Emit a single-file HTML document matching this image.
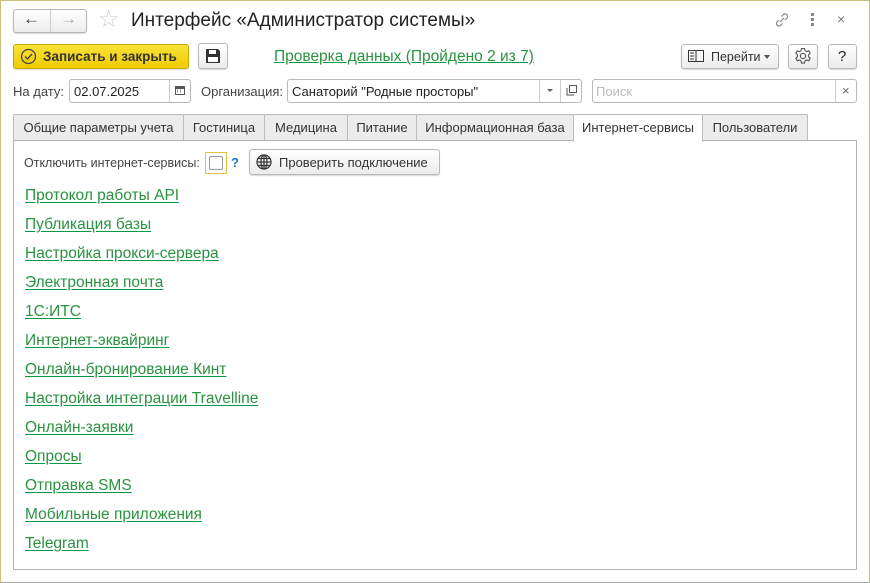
<!DOCTYPE html>
<html><head><meta charset="utf-8"><style>
*{box-sizing:border-box;margin:0;padding:0}
body{width:870px;height:583px;position:relative;background:#fff;font-family:"Liberation Sans",Arial,sans-serif;font-size:13px;color:#333;overflow:hidden}
.frame{position:absolute;left:0;top:0;width:870px;height:583px;border:1px solid #c8bd7a;border-bottom-color:#a8a8a8}
.a{position:absolute}
.btn{position:absolute;border:1px solid #b8b8b8;border-radius:3px;background:linear-gradient(#fff,#ececec);box-shadow:0 1px 1px rgba(0,0,0,.15)}
.inp{position:absolute;border:1px solid #b9b9b9;border-radius:3px;background:#fff;height:24px}
.tab{position:absolute;top:114px;height:26px;border:1px solid #bdbdbd;border-bottom:none;background:#ececec;font-size:13px;color:#333;text-align:center;line-height:25px;border-radius:2px 2px 0 0}
.lnk{position:absolute;left:25px;font-size:15.5px;color:#2a9340;text-decoration:underline;text-decoration-color:#009a44;text-underline-offset:2px}
</style></head><body>
<div class="frame"></div>
<div class="btn" style="left:13px;top:9px;width:74px;height:24px;border-radius:3px"></div>
<div class="a" style="left:50px;top:10px;width:1px;height:22px;background:#ccc"></div>
<div class="a" style="left:23px;top:9px;font-size:17px;font-weight:bold;color:#444">&#8592;</div>
<div class="a" style="left:60px;top:9px;font-size:17px;font-weight:bold;color:#aaa">&#8594;</div>
<div class="a" style="left:98px;top:5px;font-size:24px;color:#ccc">&#9734;</div>
<div class="a" style="left:131px;top:10px;font-size:19px;color:#222">Интерфейс «Администратор системы»</div>
<svg class="a" style="left:773px;top:12px" width="18" height="16" viewBox="0 0 18 16"><path d="M7 10l4-4M6 8l-2 2a2.5 2.5 0 0 0 3.5 3.5l2-2M12 8l2-2a2.5 2.5 0 0 0-3.5-3.5l-2 2" stroke="#888" fill="none" stroke-width="1.2"/></svg>
<div class="a" style="left:811px;top:13px;width:3px;line-height:4px;font-size:0"><div style="width:3px;height:3px;background:#888;margin-bottom:2px"></div><div style="width:3px;height:3px;background:#888;margin-bottom:2px"></div><div style="width:3px;height:3px;background:#888"></div></div>
<div class="a" style="left:837px;top:11px;font-size:14px;color:#777">×</div>

<div class="btn" style="left:13px;top:44px;width:176px;height:25px;background:linear-gradient(#f8e23a,#f0cc00);border-color:#c9a800"></div>
<svg class="a" style="left:20px;top:48px" width="17" height="17"><circle cx="8.5" cy="8.5" r="7" stroke="#444" stroke-width="1.3" fill="none"/><path d="M5 8.5l2.5 2.5 4.5-5" stroke="#444" stroke-width="1.4" fill="none"/></svg>
<div class="a" style="left:43px;top:49px;font-size:13.5px;font-weight:bold;color:#333">Записать и закрыть</div>
<div class="btn" style="left:198px;top:43px;width:30px;height:26px"></div>
<svg class="a" style="left:205px;top:48px" width="16" height="16"><path d="M1 1h12l2 2v12H1z" fill="#333"/><rect x="4" y="2" width="7" height="4" fill="#fff"/><rect x="3" y="9" width="10" height="5" fill="#fff"/></svg>
<div class="a" style="left:274px;top:48px;font-size:15.5px;color:#2a9340;text-decoration:underline;text-decoration-color:#009a44">Проверка данных (Пройдено 2 из 7)</div>
<div class="btn" style="left:681px;top:44px;width:98px;height:25px"></div>
<svg class="a" style="left:688px;top:50px" width="16" height="12"><rect x="0.5" y="0.5" width="15" height="11" fill="none" stroke="#333"/><path d="M8 0v12M2 3h4M2 6h4M2 9h4" stroke="#333"/></svg>
<div class="a" style="left:711px;top:50px;font-size:12.5px;color:#333">Перейти</div>
<div class="a" style="left:764px;top:55px;border:3px solid transparent;border-top:4px solid #555"></div>
<div class="btn" style="left:788px;top:44px;width:30px;height:25px"></div>
<svg class="a" style="left:794px;top:47px" width="18" height="18" viewBox="0 0 18 18"><g fill="none" stroke="#555" stroke-width="1.1"><path d="M7.5 1.5h3l.5 2.2 1.6.9 2.1-.8 1.5 2.6-1.7 1.5v1.8l1.7 1.5-1.5 2.6-2.1-.8-1.6.9-.5 2.2h-3l-.5-2.2-1.6-.9-2.1.8-1.5-2.6 1.7-1.5V7.9L1.8 6.4l1.5-2.6 2.1.8 1.6-.9z"/><circle cx="9" cy="9" r="2.6"/></g></svg>
<div class="btn" style="left:828px;top:44px;width:29px;height:25px"></div>
<div class="a" style="left:838px;top:48px;font-size:15px;color:#222">?</div>

<div class="a" style="left:13px;top:84px;color:#444">На дату:</div>
<div class="inp" style="left:69px;top:79px;width:122px"></div>
<div class="a" style="left:169px;top:80px;width:1px;height:22px;background:#ccc"></div>
<div class="a" style="left:74px;top:84px;color:#222">02.07.2025</div>
<svg class="a" style="left:175px;top:86px" width="10" height="9"><rect x="0" y="0" width="10" height="9" fill="#555"/><rect x="1" y="3" width="8" height="5" fill="#fff"/><path d="M2 4h1M5 4h1M2 6h1M5 6h1" stroke="#555"/></svg>
<div class="a" style="left:201px;top:84px;color:#444">Организация:</div>
<div class="inp" style="left:287px;top:79px;width:295px"></div>
<div class="a" style="left:539px;top:80px;width:1px;height:22px;background:#ccc"></div>
<div class="a" style="left:560px;top:80px;width:1px;height:22px;background:#ccc"></div>
<div class="a" style="left:292px;top:84px;color:#222">Санаторий "Родные просторы"</div>
<div class="a" style="left:547px;top:89px;border:3px solid transparent;border-top:3px solid #666"></div>
<svg class="a" style="left:566px;top:85px" width="11" height="11"><rect x="3.5" y="0.5" width="7" height="7" fill="none" stroke="#555"/><path d="M1 3v7h7" fill="none" stroke="#555"/></svg>
<div class="inp" style="left:592px;top:79px;width:265px"></div>
<div class="a" style="left:835px;top:80px;width:1px;height:22px;background:#ccc"></div>
<div class="a" style="left:596px;top:84px;color:#bbb">Поиск</div>
<div class="a" style="left:842px;top:83px;font-size:13px;color:#666">×</div>

<div class="tab" style="left:13px;width:171px">Общие параметры учета</div>
<div class="tab" style="left:183px;width:82px">Гостиница</div>
<div class="tab" style="left:264px;width:84px">Медицина</div>
<div class="tab" style="left:347px;width:70px">Питание</div>
<div class="tab" style="left:416px;width:158px">Информационная база</div>
<div class="a" style="left:13px;top:140px;width:844px;height:430px;border:1px solid #b3b3b3;background:#fff"></div>
<div class="tab" style="left:573px;width:130px;background:#fff;height:28px;z-index:2">Интернет-сервисы</div>
<div class="tab" style="left:702px;width:106px">Пользователи</div>

<div class="a" style="left:24px;top:156px;color:#444;font-size:12.5px">Отключить интернет-сервисы:</div>
<div class="a" style="left:205px;top:152px;width:22px;height:22px;border:1px solid #e8c040;background:#fff"><div style="margin:3px;width:14px;height:14px;border:1px solid #999;border-radius:2px"></div></div>
<div class="a" style="left:231px;top:155px;color:#1a7ac8;font-weight:bold">?</div>
<div class="btn" style="left:249px;top:149px;width:191px;height:26px"></div>
<svg class="a" style="left:256px;top:154px" width="16" height="16"><g fill="none" stroke="#333" stroke-width="1.2"><circle cx="8" cy="8" r="7"/><ellipse cx="8" cy="8" rx="3" ry="7"/><path d="M1 8h14M2 4.5h12M2 11.5h12M8 1v14"/></g></svg>
<div class="a" style="left:279px;top:155px;color:#333">Проверить подключение</div>

<div class="lnk" style="top:187px">Протокол работы API</div>
<div class="lnk" style="top:216px">Публикация базы</div>
<div class="lnk" style="top:245px">Настройка прокси-сервера</div>
<div class="lnk" style="top:274px">Электронная почта</div>
<div class="lnk" style="top:303px">1С:ИТС</div>
<div class="lnk" style="top:332px">Интернет-эквайринг</div>
<div class="lnk" style="top:361px">Онлайн-бронирование Кинт</div>
<div class="lnk" style="top:390px">Настройка интеграции Travelline</div>
<div class="lnk" style="top:419px">Онлайн-заявки</div>
<div class="lnk" style="top:448px">Опросы</div>
<div class="lnk" style="top:477px">Отправка SMS</div>
<div class="lnk" style="top:506px">Мобильные приложения</div>
<div class="lnk" style="top:535px">Telegram</div>
</body></html>
